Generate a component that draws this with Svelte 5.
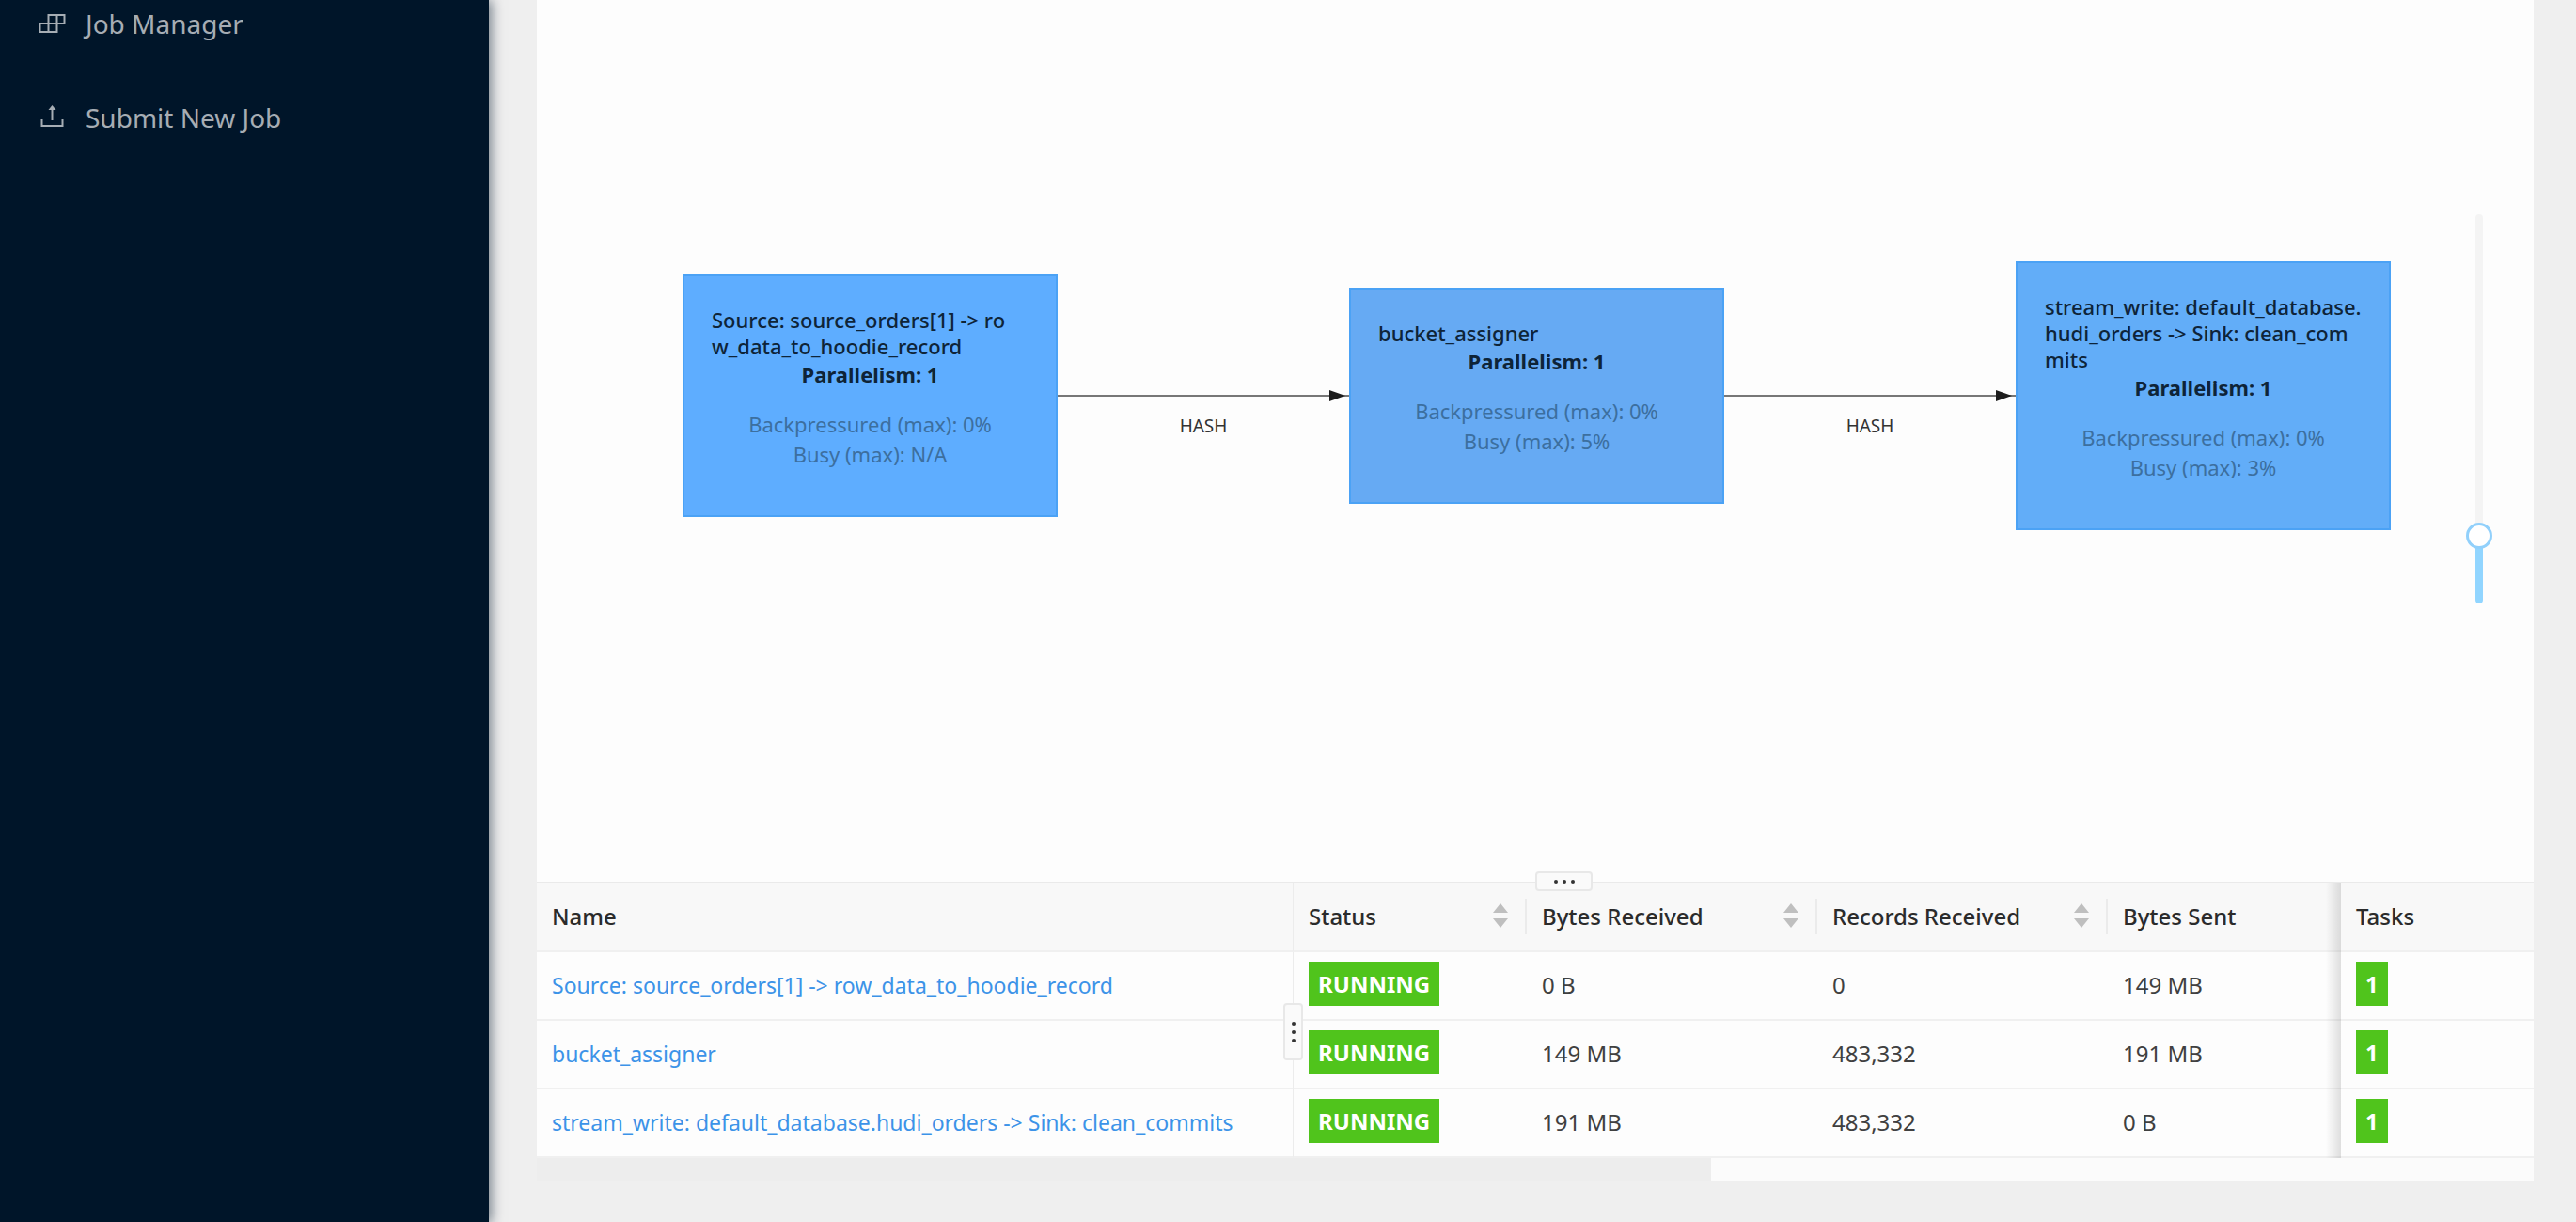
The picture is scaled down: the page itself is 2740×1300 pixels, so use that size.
<script lang="ts">
	type Vertex = { name: string; lines: string[]; backpressured: string; busy: string; tone: string };

	const vertices: Vertex[] = [
		{
			name: 'Source: source_orders[1] -> row_data_to_hoodie_record',
			lines: ['Source: source_orders[1] -> ro', 'w_data_to_hoodie_record'],
			backpressured: '0%',
			busy: 'N/A',
			tone: 'idle',
		},
		{
			name: 'bucket_assigner',
			lines: ['bucket_assigner'],
			backpressured: '0%',
			busy: '5%',
			tone: 'warm',
		},
		{
			name: 'stream_write: default_database.hudi_orders -> Sink: clean_commits',
			lines: ['stream_write: default_database.', 'hudi_orders -> Sink: clean_com', 'mits'],
			backpressured: '0%',
			busy: '3%',
			tone: 'mild',
		},
	];

	const rows = [
		{ name: vertices[0].name, received: '0 B', records: '0', sent: '149 MB', tasks: 1 },
		{ name: vertices[1].name, received: '149 MB', records: '483,332', sent: '191 MB', tasks: 1 },
		{ name: vertices[2].name, received: '191 MB', records: '483,332', sent: '0 B', tasks: 1 },
	];

	let zoom = $state(15);
</script>

{#snippet sorter(label: string)}
	<button type="button" class="sorter" aria-label="Sort by {label}">
		<svg viewBox="0 0 18 26" width="18" height="26" aria-hidden="true">
			<path d="M9 0l8 10H1zM9 26l8-10H1z" fill="#bfbfbf" />
		</svg>
	</button>
{/snippet}

<div class="layout">
	<aside class="sidebar">
		<nav>
			<ul class="menu">
				<li>
					<a href="#/job-manager">
						<svg viewBox="0 0 30 28" width="30" height="28" aria-hidden="true">
							<path d="M11.5 5h17v9h-17zM2.5 14h18v9h-18zM20.5 5v9M11.5 14v9" fill="none" stroke="currentColor" stroke-width="2" />
						</svg>
						<span>Job Manager</span>
					</a>
				</li>
				<li>
					<a href="#/submit">
						<svg viewBox="0 0 30 28" width="30" height="28" aria-hidden="true">
							<path d="M4.5 16v7h22v-7M15.5 17V4" fill="none" stroke="currentColor" stroke-width="2" />
							<path d="M15.5 1l4 5h-8z" fill="currentColor" />
						</svg>
						<span>Submit New Job</span>
					</a>
				</li>
			</ul>
		</nav>
	</aside>

	<main class="content">
		<section class="graph" aria-label="Job graph">
			<div class="dag">
				{#each vertices as vertex, i}
					{#if i > 0}
						<div class="edge">
							<div class="line"></div>
							<span class="edge-label">HASH</span>
						</div>
					{/if}
					<article class="node {vertex.tone}">
						<h2>
							{#each vertex.lines as line}
								<span>{line}</span>
							{/each}
						</h2>
						<p class="parallelism">Parallelism: 1</p>
						<p class="metric">Backpressured (max): {vertex.backpressured}</p>
						<p class="metric">Busy (max): {vertex.busy}</p>
					</article>
				{/each}
			</div>
			<input class="zoom" type="range" min="0" max="100" bind:value={zoom} aria-label="Zoom" />
		</section>

		<section class="vertices">
			<button type="button" class="grip across" aria-label="Resize list height"><i></i><i></i><i></i></button>
			<button type="button" class="grip down" aria-label="Resize list width"><i></i><i></i><i></i></button>
			<table>
				<colgroup>
					<col />
					<col class="w-status" />
					<col class="w-wide" />
					<col class="w-wide" />
					<col class="w-status" />
					<col class="w-tasks" />
				</colgroup>
				<thead>
					<tr>
						<th class="name">Name</th>
						<th><div class="head">Status {@render sorter('status')}</div></th>
						<th><div class="head">Bytes Received {@render sorter('bytes received')}</div></th>
						<th><div class="head">Records Received {@render sorter('records received')}</div></th>
						<th class="shaded">Bytes Sent</th>
						<th>Tasks</th>
					</tr>
				</thead>
				<tbody>
					{#each rows as row}
						<tr>
							<td class="name"><a href="#/vertex">{row.name}</a></td>
							<td><span class="tag">RUNNING</span></td>
							<td>{row.received}</td>
							<td>{row.records}</td>
							<td class="shaded">{row.sent}</td>
							<td><span class="tag">{row.tasks}</span></td>
						</tr>
					{/each}
				</tbody>
			</table>
			<div class="scrollbar"><div class="thumb"></div></div>
		</section>
	</main>
</div>

<style>
	:global(body) {
		background: #efefef;
	}

	.layout {
		display: flex;
		min-height: 100vh;
		font-family: 'Noto Sans', 'Open Sans', sans-serif;
		font-size: 24px;
		color: #404040;
	}

	.sidebar {
		flex: 0 0 520px;
		background: #001529;
		box-shadow: 3px 0 12px rgba(0, 21, 41, 0.5);
	}

	.menu {
		display: flex;
		flex-direction: column;
		gap: 50px;
		margin: 0;
		padding: 0;
		list-style: none;
	}

	.menu a {
		display: flex;
		align-items: center;
		gap: 21px;
		padding: 0 40px;
		color: #a6adb4;
		font-size: 28px;
		line-height: 50px;
		text-decoration: none;
	}

	.content {
		flex: 1;
		min-width: 0;
		padding: 0 45px 45px 51px;
	}

	.graph {
		position: relative;
		box-sizing: border-box;
		display: flex;
		align-items: center;
		min-height: 938px;
		padding: 0 152px 96px 155px;
		background: #fdfdfd;
	}

	.dag {
		flex: 1;
		display: flex;
		align-items: center;
	}

	.node {
		box-sizing: border-box;
		flex: 0 0 399px;
		padding: 32px 29px 49px;
		border: 2px solid #4ba2f5;
		color: #0e2438;
		font-size: 22px;
		line-height: 32px;
	}

	.idle {
		background: #5eadff;
	}

	.warm {
		background: #66aaf3;
	}

	.mild {
		background: #62adf8;
	}

	.node h2 {
		margin: 0;
		font-size: 22px;
		font-weight: 500;
		line-height: 28px;
	}

	.node h2 span {
		display: block;
		white-space: nowrap;
	}

	.node p {
		margin: 0;
		text-align: center;
	}

	.node .parallelism {
		margin-bottom: 21px;
		font-weight: 700;
	}

	.metric {
		color: #3c6f9f;
	}

	.edge {
		position: relative;
		flex: 1;
	}

	.line {
		height: 2px;
		background: #777;
	}

	.line::after {
		content: '';
		position: absolute;
		top: -5px;
		right: 4px;
		border: 6px solid transparent;
		border-right-width: 0;
		border-left: 17px solid #1c1c1c;
	}

	.edge-label {
		position: absolute;
		top: 20px;
		width: 100%;
		color: #333;
		font-size: 19px;
		line-height: 26px;
		text-align: center;
	}

	.zoom {
		position: absolute;
		top: 228px;
		right: 44px;
		width: 28px;
		height: 414px;
		margin: 0;
		appearance: none;
		background: none;
		writing-mode: vertical-lr;
		direction: rtl;
		cursor: pointer;
	}

	.zoom::-webkit-slider-runnable-track {
		width: 8px;
		border-radius: 4px;
		background: linear-gradient(to top, #91d5ff 17%, #f4f4f4 17%);
	}

	.zoom::-webkit-slider-thumb {
		appearance: none;
		box-sizing: border-box;
		width: 28px;
		height: 28px;
		margin-left: -10px;
		border: 3px solid #91d0fb;
		border-radius: 50%;
		background: #fff;
	}

	.vertices {
		position: relative;
	}

	table {
		width: 100%;
		table-layout: fixed;
		border-collapse: separate;
		border-spacing: 0;
		border-top: 1px solid #eaeaea;
		background: #fdfdfd;
	}

	.w-status {
		width: 248px;
	}

	.w-wide {
		width: 309px;
	}

	.w-tasks {
		width: 205px;
	}

	th,
	td {
		position: relative;
		box-sizing: border-box;
		height: 73px;
		padding: 0 16px 2px;
		border-bottom: 2px solid #f0f0f0;
		text-align: left;
		white-space: nowrap;
	}

	th {
		height: 74px;
		background: #f8f8f8;
		color: #2b2b2b;
		font-weight: 500;
	}

	.name {
		border-right: 1px solid #ececec;
	}

	.head {
		display: flex;
		align-items: center;
		justify-content: space-between;
		padding-right: 3px;
	}

	.head::after {
		content: '';
		position: absolute;
		top: 17px;
		right: 0;
		width: 2px;
		height: 38px;
		background: #ebebeb;
	}

	.sorter {
		display: flex;
		margin: 0;
		padding: 0;
		border: 0;
		background: none;
		cursor: pointer;
	}

	.shaded::after {
		content: '';
		position: absolute;
		top: 0;
		right: 0;
		bottom: -2px;
		width: 16px;
		background: linear-gradient(to right, transparent, rgba(0, 0, 0, 0.12));
	}

	td a {
		color: #3c93e8;
		font-size: 23px;
		text-decoration: none;
	}

	.tag {
		display: inline-block;
		margin-bottom: 2px;
		padding: 0 10px;
		background: #50c41c;
		color: #fff;
		font-weight: 700;
		line-height: 47px;
	}

	.grip {
		position: absolute;
		z-index: 1;
		box-sizing: border-box;
		display: flex;
		align-items: center;
		justify-content: center;
		gap: 5px;
		padding: 0;
		border: 2px solid #e8e8e8;
		border-radius: 4px;
		background: #fafafa;
	}

	.grip i {
		width: 4px;
		height: 4px;
		border-radius: 50%;
		background: #333;
	}

	.across {
		top: -11px;
		left: 50%;
		width: 61px;
		height: 21px;
		cursor: row-resize;
	}

	.down {
		top: 129px;
		right: 1309px;
		flex-direction: column;
		width: 21px;
		height: 61px;
		cursor: col-resize;
	}

	.scrollbar {
		display: flex;
		height: 24px;
		background: #fbfbfb;
	}

	.thumb {
		width: 1249px;
		background: #ededed;
	}
</style>
